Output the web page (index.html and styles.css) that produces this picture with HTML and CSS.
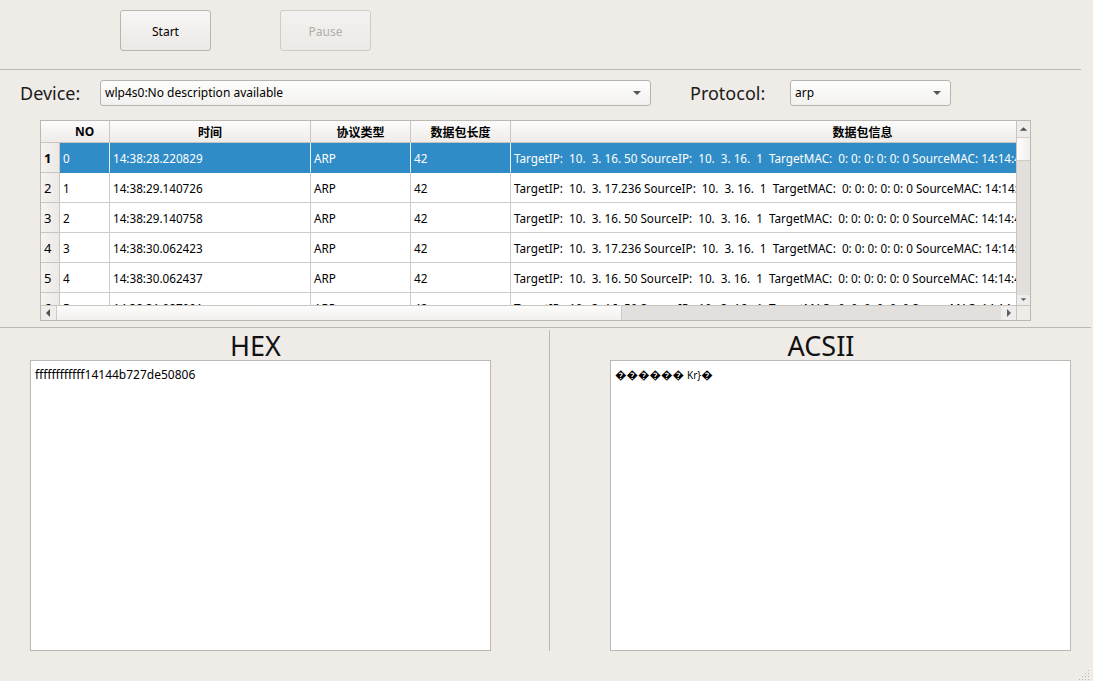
FILE: index.html
```html
<!DOCTYPE html>
<html>
<head>
<meta charset="utf-8">
<link rel="stylesheet" href="styles.css">
</head>
<body>
<div class="window">
  <div class="toolbar">
    <button class="btn">Start</button>
    <button class="btn disabled">Pause</button>
  </div>
  <div class="hline top-line"></div>
  <div class="selectors">
    <span class="label">Device:</span>
    <div class="combo combo-device"><span>wlp4s0:No description available</span><span class="caret"></span></div>
    <span class="label label-proto">Protocol:</span>
    <div class="combo combo-proto"><span>arp</span><span class="caret"></span></div>
  </div>
  <div class="table-frame">
    <div class="table-main">
      <div class="viewport">
        <div class="grid">
          <div class="hdr corner"></div>
          <div class="hdr">NO</div>
          <div class="hdr">时间</div>
          <div class="hdr">协议类型</div>
          <div class="hdr">数据包长度</div>
          <div class="hdr">数据包信息</div>

          <div class="rh bold">1</div>
          <div class="c sel">0</div><div class="c sel">14:38:28.220829</div><div class="c sel">ARP</div><div class="c sel">42</div><div class="c sel">TargetIP:&nbsp; 10.&nbsp; 3. 16. 50 SourceIP:&nbsp; 10.&nbsp; 3. 16.&nbsp; 1&nbsp; TargetMAC:&nbsp; 0: 0: 0: 0: 0: 0 SourceMAC: 14:14:4b:72:7d:e5</div>

          <div class="rh">2</div>
          <div class="c">1</div><div class="c">14:38:29.140726</div><div class="c">ARP</div><div class="c">42</div><div class="c">TargetIP:&nbsp; 10.&nbsp; 3. 17.236 SourceIP:&nbsp; 10.&nbsp; 3. 16.&nbsp; 1&nbsp; TargetMAC:&nbsp; 0: 0: 0: 0: 0: 0 SourceMAC: 14:14:4b:72:7d:e5</div>

          <div class="rh">3</div>
          <div class="c">2</div><div class="c">14:38:29.140758</div><div class="c">ARP</div><div class="c">42</div><div class="c">TargetIP:&nbsp; 10.&nbsp; 3. 16. 50 SourceIP:&nbsp; 10.&nbsp; 3. 16.&nbsp; 1&nbsp; TargetMAC:&nbsp; 0: 0: 0: 0: 0: 0 SourceMAC: 14:14:4b:72:7d:e5</div>

          <div class="rh">4</div>
          <div class="c">3</div><div class="c">14:38:30.062423</div><div class="c">ARP</div><div class="c">42</div><div class="c">TargetIP:&nbsp; 10.&nbsp; 3. 17.236 SourceIP:&nbsp; 10.&nbsp; 3. 16.&nbsp; 1&nbsp; TargetMAC:&nbsp; 0: 0: 0: 0: 0: 0 SourceMAC: 14:14:4b:72:7d:e5</div>

          <div class="rh">5</div>
          <div class="c">4</div><div class="c">14:38:30.062437</div><div class="c">ARP</div><div class="c">42</div><div class="c">TargetIP:&nbsp; 10.&nbsp; 3. 16. 50 SourceIP:&nbsp; 10.&nbsp; 3. 16.&nbsp; 1&nbsp; TargetMAC:&nbsp; 0: 0: 0: 0: 0: 0 SourceMAC: 14:14:4b:72:7d:e5</div>

          <div class="rh">6</div>
          <div class="c">5</div><div class="c">14:38:31.087091</div><div class="c">ARP</div><div class="c">42</div><div class="c">TargetIP:&nbsp; 10.&nbsp; 3. 16. 50 SourceIP:&nbsp; 10.&nbsp; 3. 16.&nbsp; 1&nbsp; TargetMAC:&nbsp; 0: 0: 0: 0: 0: 0 SourceMAC: 14:14:4b:72:7d:e5</div>
        </div>
      </div>
      <div class="vscroll">
        <div class="sb-btn"><svg width="14" height="14" viewBox="0 0 14 14"><path d="M3 9 L7 5 L11 9 Z" fill="#505050"/></svg></div>
        <div class="v-thumb"></div>
        <div class="v-track"></div>
        <div class="sb-btn"><svg width="14" height="10" viewBox="0 0 14 10"><path d="M4 3 L7 6 L10 3 Z" fill="#606060"/></svg></div>
      </div>
    </div>
    <div class="hscroll">
      <div class="sb-btn h"><svg width="14" height="14" viewBox="0 0 14 14"><path d="M8 3 L4 7 L8 11 Z" fill="#505050"/></svg></div>
      <div class="h-thumb"></div>
      <div class="h-track"></div>
      <div class="sb-btn h"><svg width="14" height="14" viewBox="0 0 14 14"><path d="M5 3 L9 7 L5 11 Z" fill="#606060"/></svg></div>
      <div class="sb-corner"></div>
    </div>
  </div>
  <div class="hline mid-line"></div>
  <div class="panels">
    <div class="panel">
      <div class="panel-title hex-title">HEX</div>
      <div class="textbox hex-box">ffffffffffff14144b727de50806</div>
    </div>
    <div class="vdivider"></div>
    <div class="panel panel-right">
      <div class="panel-title ascii-title">ACSII</div>
      <div class="textbox ascii-box">&#xFFFD;&#xFFFD;&#xFFFD;&#xFFFD;&#xFFFD;&#xFFFD; <span class="small">Kr}</span>&#xFFFD;</div>
    </div>
  </div>
  <div class="grip">
    <svg width="12" height="12" viewBox="0 0 12 12">
      <g fill="#b8b4b0">
        <rect x="9" y="1" width="1" height="1"/>
        <rect x="6" y="4" width="1" height="1"/><rect x="9" y="4" width="1" height="1"/>
        <rect x="3" y="7" width="1" height="1"/><rect x="6" y="7" width="1" height="1"/><rect x="9" y="7" width="1" height="1"/>
        <rect x="0" y="10" width="1" height="1"/><rect x="3" y="10" width="1" height="1"/><rect x="6" y="10" width="1" height="1"/><rect x="9" y="10" width="1" height="1"/>
      </g>
    </svg>
  </div>
</div>
</body>
</html>
```

FILE: styles.css
```css
* { box-sizing: border-box; }
html, body { margin: 0; padding: 0; }
body {
  background: #efebe7;
  font-family: "Noto Sans", "Noto Sans CJK SC", sans-serif;
  font-size: 12px;
  color: #000;
  width: 1093px;
  height: 681px;
  overflow: hidden;
}
.window {
  position: relative;
  width: 1093px;
  height: 681px;
  display: flex;
  flex-direction: column;
}
.toolbar {
  display: flex;
  gap: 69px;
  padding: 10px 0 0 120px;
  height: 69px;
}
.btn {
  width: 91px;
  height: 41px;
  border: 1px solid #b9b5b1;
  border-radius: 3px;
  background: linear-gradient(#f8f7f6, #ebe8e5);
  font-family: "Noto Sans", sans-serif;
  font-size: 12px;
  color: #000;
  padding: 2px 0 0 0;
}
.btn.disabled {
  color: #b0adaa;
  border-color: #d0ccc8;
  background: linear-gradient(#f4f2f0, #ece9e6);
}
.hline { height: 1px; background: #bcb8b4; }
.top-line { width: 1081px; }
.selectors {
  display: flex;
  align-items: center;
  height: 50px;
  padding: 0 0 5px 20px;
}
.label {
  font-size: 18px;
  width: 80px;
  color: #1a1a1a;
}
.label-proto { margin-left: 39px; width: 100px; }
.combo {
  height: 26px;
  border: 1px solid #b7b3af;
  border-radius: 3px;
  background: linear-gradient(#fdfdfc, #f3f1ef);
  display: flex;
  align-items: center;
  justify-content: space-between;
  padding: 0 9px 0 4px;
  font-size: 12px;
}
.combo-device { width: 551px; }
.combo-proto { width: 161px; }
.caret {
  width: 0; height: 0;
  border-left: 4px solid transparent;
  border-right: 4px solid transparent;
  border-top: 4px solid #555;
}
.table-frame {
  margin: 0 0 0 40px;
  width: 991px;
  height: 201px;
  border: 1px solid #bcb8b4;
  background: #fff;
  display: flex;
  flex-direction: column;
}
.table-main {
  display: flex;
  height: 184px;
}
.viewport {
  width: 975px;
  height: 184px;
  overflow: hidden;
}
.grid {
  display: grid;
  grid-template-columns: 19px 50px 201px 100px 100px 704px;
  grid-template-rows: 22px repeat(6, 30px);
  width: 1174px;
}
.hdr {
  background: linear-gradient(#fdfcfc, #eeebe8);
  border-right: 1px solid #c8c4c0;
  border-bottom: 1px solid #c8c4c0;
  font-weight: bold;
  font-size: 12px;
  display: flex;
  align-items: center;
  justify-content: center;
  white-space: nowrap;
}
.corner { border-right: none; }
.rh {
  background: linear-gradient(90deg, #f6f4f2, #ebe8e5);
  border-right: 1px solid #c8c4c0;
  border-bottom: 1px solid #c8c4c0;
  display: flex;
  align-items: center;
  padding-left: 3px;
  font-size: 13px;
}
.rh.bold { font-weight: bold; }
.c {
  border-right: 1px solid #cfcbc7;
  border-bottom: 1px solid #cfcbc7;
  padding-left: 3px;
  display: flex;
  align-items: center;
  white-space: nowrap;
  overflow: hidden;
  font-size: 11.7px;
}
.c.sel {
  background: #308cc6;
  color: #fff;
  border-color: #308cc6;
  border-right-color: #e8eef4;
}
.vscroll {
  width: 14px;
  border-left: 1px solid #c8c4c0;
  display: flex;
  flex-direction: column;
  background: #e2dfdc;
}
.sb-btn {
  height: 16px;
  background: #efedeb;
  display: flex;
  align-items: center;
  justify-content: center;
}
.vscroll .sb-btn:last-child { height: 10px; align-items: flex-start; }
.v-thumb {
  height: 24px;
  background: linear-gradient(90deg, #fcfcfc, #f2f0ee);
  border-top: 1px solid #cfcbc7;
  border-bottom: 1px solid #cfcbc7;
}
.v-track { flex: 1; }
.hscroll {
  height: 15px;
  border-top: 1px solid #c8c4c0;
  display: flex;
  background: #e2dfdc;
}
.sb-btn.h { width: 15px; height: 14px; }
.h-thumb {
  width: 566px;
  background: linear-gradient(#fcfcfc, #f2f0ee);
  border-left: 1px solid #cfcbc7;
  border-right: 1px solid #cfcbc7;
}
.h-track { flex: 1; }
.sb-corner {
  width: 14px;
  border-left: 1px solid #c8c4c0;
  background: #efebe7;
}
.mid-line { margin-top: 6px; width: 1091px; }
.panels {
  display: flex;
  height: 323px;
}
.panel {
  width: 549px;
  display: flex;
  flex-direction: column;
  align-items: flex-start;
  padding-left: 30px;
}
.panel-right { width: 543px; padding-left: 60px; }
.panel-title {
  text-align: center;
  font-size: 27px;
  line-height: 29px;
  margin-top: 3px;
  color: #111;
}
.hex-title { width: 451px; }
.ascii-title { width: 422px; }
.textbox {
  width: 461px;
  height: 291px;
  border: 1px solid #bcb8b4;
  background: #fff;
  padding: 6px 4px;
  font-size: 12px;
  line-height: 16px;
}
.ascii-box { font-size: 11.5px; }
.small { font-size: 10px; }
.vdivider {
  width: 1px;
  background: #bcb8b4;
  margin-top: 2px;
  height: 321px;
}
.grip {
  position: absolute;
  right: 2px;
  bottom: 1px;
  width: 12px;
  height: 12px;
}
```
